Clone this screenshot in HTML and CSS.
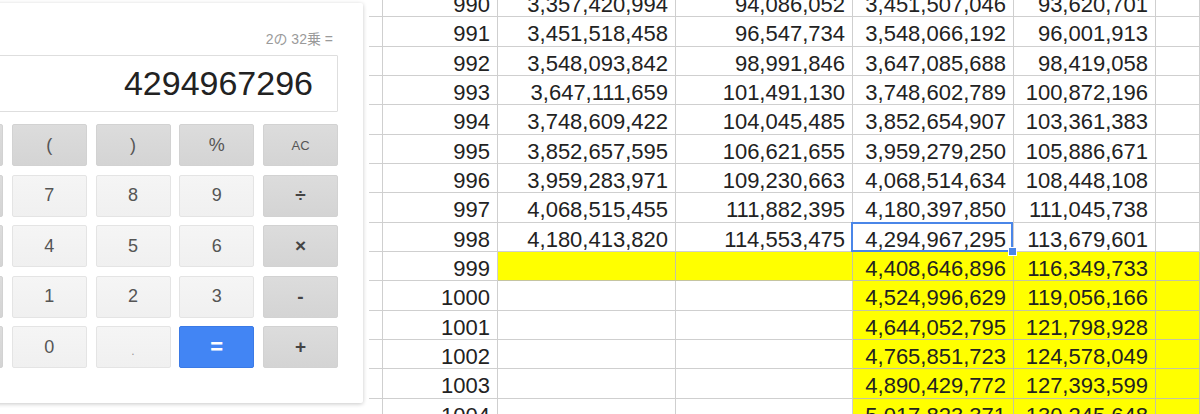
FILE: index.html
```html
<!DOCTYPE html>
<html lang="ja">
<head>
<meta charset="utf-8">
<title>Calculator and sheet</title>
<link rel="stylesheet" href="styles.css">
</head>
<body>
<div class="main">
  <div class="calc-col">
    <div class="card">
      <div class="expr">2の 32乗 =</div>
      <div class="display">4294967296</div>
      <div class="keys">
        <div class="key op"></div><div class="key op">(</div><div class="key op">)</div><div class="key op">%</div><div class="key op small">AC</div>
        <div class="key op"></div><div class="key">7</div><div class="key">8</div><div class="key">9</div><div class="key op sym">÷</div>
        <div class="key op"></div><div class="key">4</div><div class="key">5</div><div class="key">6</div><div class="key op sym">×</div>
        <div class="key op"></div><div class="key">1</div><div class="key">2</div><div class="key">3</div><div class="key op sym">-</div>
        <div class="key op"></div><div class="key">0</div><div class="key dot">.</div><div class="key eq">=</div><div class="key op sym">+</div>
      </div>
    </div>
  </div>
  <div class="sheet">
    <div class="row"><div class="c"></div><div class="c">990</div><div class="c">3,357,420,994</div><div class="c">94,086,052</div><div class="c">3,451,507,046</div><div class="c">93,620,701</div><div class="c"></div></div>
    <div class="row"><div class="c"></div><div class="c">991</div><div class="c">3,451,518,458</div><div class="c">96,547,734</div><div class="c">3,548,066,192</div><div class="c">96,001,913</div><div class="c"></div></div>
    <div class="row"><div class="c"></div><div class="c">992</div><div class="c">3,548,093,842</div><div class="c">98,991,846</div><div class="c">3,647,085,688</div><div class="c">98,419,058</div><div class="c"></div></div>
    <div class="row"><div class="c"></div><div class="c">993</div><div class="c">3,647,111,659</div><div class="c">101,491,130</div><div class="c">3,748,602,789</div><div class="c">100,872,196</div><div class="c"></div></div>
    <div class="row"><div class="c"></div><div class="c">994</div><div class="c">3,748,609,422</div><div class="c">104,045,485</div><div class="c">3,852,654,907</div><div class="c">103,361,383</div><div class="c"></div></div>
    <div class="row"><div class="c"></div><div class="c">995</div><div class="c">3,852,657,595</div><div class="c">106,621,655</div><div class="c">3,959,279,250</div><div class="c">105,886,671</div><div class="c"></div></div>
    <div class="row"><div class="c"></div><div class="c">996</div><div class="c">3,959,283,971</div><div class="c">109,230,663</div><div class="c">4,068,514,634</div><div class="c">108,448,108</div><div class="c"></div></div>
    <div class="row"><div class="c"></div><div class="c">997</div><div class="c">4,068,515,455</div><div class="c">111,882,395</div><div class="c">4,180,397,850</div><div class="c">111,045,738</div><div class="c"></div></div>
    <div class="row"><div class="c"></div><div class="c">998</div><div class="c">4,180,413,820</div><div class="c">114,553,475</div><div class="c sel">4,294,967,295</div><div class="c">113,679,601</div><div class="c"></div></div>
    <div class="row"><div class="c"></div><div class="c">999</div><div class="c y"></div><div class="c y"></div><div class="c y">4,408,646,896</div><div class="c y">116,349,733</div><div class="c y"></div></div>
    <div class="row"><div class="c"></div><div class="c">1000</div><div class="c"></div><div class="c"></div><div class="c y">4,524,996,629</div><div class="c y">119,056,166</div><div class="c y"></div></div>
    <div class="row"><div class="c"></div><div class="c">1001</div><div class="c"></div><div class="c"></div><div class="c y">4,644,052,795</div><div class="c y">121,798,928</div><div class="c y"></div></div>
    <div class="row"><div class="c"></div><div class="c">1002</div><div class="c"></div><div class="c"></div><div class="c y">4,765,851,723</div><div class="c y">124,578,049</div><div class="c y"></div></div>
    <div class="row"><div class="c"></div><div class="c">1003</div><div class="c"></div><div class="c"></div><div class="c y">4,890,429,772</div><div class="c y">127,393,599</div><div class="c y"></div></div>
    <div class="row"><div class="c"></div><div class="c">1004</div><div class="c"></div><div class="c"></div><div class="c y">5,017,823,371</div><div class="c y">130,245,648</div><div class="c y"></div></div>
  </div>
</div>
</body>
</html>
```

FILE: styles.css
```css
html, body {
  margin: 0;
  padding: 0;
  background: #fff;
}
body {
  width: 1200px;
  height: 414px;
  overflow: hidden;
  font-family: "Liberation Sans", Arial, "Noto Sans CJK JP", sans-serif;
}
.main {
  display: flex;
  height: 414px;
  overflow: hidden;
}
.calc-col {
  width: 369px;
  flex: none;
  position: relative;
  z-index: 2;
}
.card {
  width: 460px;
  height: 400px;
  margin-left: -97px;
  margin-top: 3px;
  padding: 0 25px;
  box-sizing: border-box;
  background: #fff;
  border-radius: 2px;
  box-shadow: 0 1px 4px rgba(0, 0, 0, 0.22);
}
.expr {
  height: 52px;
  box-sizing: border-box;
  padding-top: 26px;
  padding-right: 5px;
  line-height: 20px;
  font-size: 14px;
  color: #9a9a9a;
  text-align: right;
  font-family: "Liberation Sans", Arial, "Noto Sans CJK JP", sans-serif;
}
.display {
  height: 57px;
  box-sizing: border-box;
  border: 1px solid #dedede;
  border-radius: 1px;
  padding-right: 24px;
  text-align: right;
  font-size: 34px;
  line-height: 55px;
  color: #222;
}
.keys {
  margin-top: 12px;
  display: grid;
  grid-template-columns: repeat(5, 75px);
  grid-auto-rows: 42px;
  column-gap: 8.75px;
  row-gap: 8.5px;
}
.key {
  box-sizing: border-box;
  border: 1px solid #e4e4e4;
  border-radius: 2px;
  background: linear-gradient(#f5f5f5, #f0f0f0);
  display: flex;
  align-items: center;
  justify-content: center;
  font-size: 18px;
  color: #555;
}
.key.op {
  background: linear-gradient(#dcdcdc, #d4d4d4);
  border-color: #d2d2d2;
  color: #555;
}
.key.small {
  font-size: 13px;
}
.key.sym {
  color: #444;
  font-size: 19px;
  font-weight: bold;
}
.key.dot {
  color: #999;
  font-size: 12px;
  padding-top: 8px;
}
.key.eq {
  background: #4285f4;
  border-color: #3b7ae6;
  color: #fff;
  font-size: 22px;
  font-weight: bold;
}
.sheet {
  flex: 1;
  margin-top: -12px;
  overflow: hidden;
}
.row {
  display: grid;
  grid-template-columns: 14px 115px 178px 177px 161px 142px 1fr;
  grid-template-rows: 29.333px;
  height: 29.333px;
}
.c {
  box-sizing: border-box;
  height: 29.333px;
  border-right: 1px solid #cfcfcf;
  border-bottom: 1px solid #cfcfcf;
  font-size: 22px;
  line-height: 23px;
  padding-top: 5px;
  padding-right: 7px;
  text-align: right;
  color: #222;
  white-space: nowrap;
  background: #fff;
}
.c.y {
  background: #ffff00;
  border-color: #c4c4a0;
}
.c.sel {
  position: relative;
}
.c.sel::before {
  content: "";
  position: absolute;
  left: -2px;
  top: -1px;
  right: 0;
  bottom: -1px;
  border: 2px solid #4a86e8;
  box-sizing: border-box;
  pointer-events: none;
}
.c.sel::after {
  content: "";
  position: absolute;
  right: -4px;
  bottom: -5px;
  width: 7px;
  height: 7px;
  background: #4a86e8;
  border: 1px solid #fff;
  z-index: 3;
}
```
